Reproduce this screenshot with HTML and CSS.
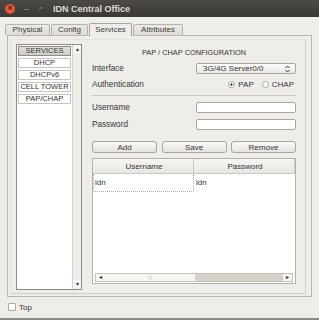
FILE: index.html
```html
<!DOCTYPE html>
<html lang="en">

<head>
  <meta charset="UTF-8">
  <title>IDN Central Office</title>
  <link rel="stylesheet" href="styles.css">
</head>

<body>
  <div class="window">
    <!-- заголовок окна -->
    <div class="titlebar">
      <span class="titlebar__close">&times;</span>
      <span class="titlebar__min">&ndash;</span>
      <span class="titlebar__max">&#8599;</span>
      <span class="titlebar__title">IDN Central Office</span>
    </div>

    <div class="tabs">
      <div class="tab">Physical</div>
      <div class="tab">Config</div>
      <div class="tab tab_active">Services</div>
      <div class="tab">Attributes</div>
    </div>

    <div class="panel">
      <div class="frame">
        <!-- список сервисов -->
        <div class="list">
          <div class="list__items">
            <div class="list__head">SERVICES</div>
            <div class="list__item">DHCP</div>
            <div class="list__item">DHCPv6</div>
            <div class="list__item">CELL TOWER</div>
            <div class="list__item">PAP/CHAP</div>
          </div>
          <div class="vscroll">
            <div class="vscroll__arrow">&#9652;</div>
            <div class="vscroll__arrow">&#9662;</div>
          </div>
        </div>

        <!-- настройки -->
        <div class="config">
          <div class="config__title">PAP / CHAP CONFIGURATION</div>
          <div class="row">
            <span>Interface</span>
            <div class="select">3G/4G Server0/0
              <svg class="select__arrow" width="5" height="8" viewBox="0 0 5 8">
                <path d="M0.5 3 L2.5 1 L4.5 3 M0.5 5 L2.5 7 L4.5 5" fill="none" stroke="#333" stroke-width="1" />
              </svg>
            </div>
          </div>
          <div class="row row_auth">
            <span>Authentication</span>
            <div class="radios">
              <span class="radio radio_on"></span>PAP
              <span class="radio"></span>CHAP
            </div>
          </div>
          <div class="sep"></div>
          <div class="row row_field">
            <span>Username</span>
            <div class="input"></div>
          </div>
          <div class="row row_field">
            <span>Password</span>
            <div class="input"></div>
          </div>
          <div class="buttons">
            <button class="btn">Add</button>
            <button class="btn">Save</button>
            <button class="btn">Remove</button>
          </div>
          <div class="table">
            <div class="table__head">
              <div class="table__cell">Username</div>
              <div class="table__cell">Password</div>
            </div>
            <div class="table__row">
              <div class="table__cell table__cell_focus">idn</div>
              <div class="table__cell">idn</div>
            </div>
            <div class="table__fill"></div>
            <div class="hscroll">
              <div class="hscroll__arrow">&#9666;</div>
              <div class="hscroll__track"><span class="hscroll__grip">|||</span></div>
              <div class="hscroll__thumb"></div>
              <div class="hscroll__arrow">&#9656;</div>
            </div>
          </div>
        </div>
      </div>
    </div>

    <div class="top">
      <span class="checkbox"></span>Top
    </div>
  </div>
</body>

</html>
```

FILE: styles.css
```css
* {
  box-sizing: border-box;
}

body {
  margin: 0;
  font-family: "Liberation Sans", Arial, sans-serif;
  font-size: 8px;
  color: #3c3c3c;
}

.window {
  width: 319px;
  height: 320px;
  background-color: #efedea;
  border-bottom: 2px solid #8e8b86;
  overflow: hidden
}

.titlebar {
  display: flex;
  align-items: center;
  height: 17px;
  padding-left: 5px;
  background: linear-gradient(#4b4a45, #3a3935);
  color: #7d7b76
}

.titlebar__close {
  display: flex;
  align-items: center;
  justify-content: center;
  width: 10px;
  height: 10px;
  border-radius: 50%;
  background: radial-gradient(#f26d4a, #d9441e);
  color: #4a2014;
  font-size: 9px;
  font-weight: 700;
  line-height: 1
}

.titlebar__min {
  margin-left: 9px;
  font-size: 9px;
  font-weight: 700
}

.titlebar__max {
  margin-left: 8px;
  font-size: 7px
}

.titlebar__title {
  margin-left: 10px;
  color: #dfdbd2;
  font-size: 9px;
  font-weight: 700
}

.tabs {
  display: flex;
  align-items: flex-end;
  height: 18px;
  padding-left: 5px
}

.tab {
  height: 11px;
  padding: 0 4px;
  margin-right: 1px;
  border: 1px solid #b7b3ab;
  border-bottom: none;
  border-radius: 2px 2px 0 0;
  background: linear-gradient(#ebe9e6, #dedbd6);
  line-height: 10px;
  text-align: center
}

.tab:nth-child(1) {
  width: 45px
}

.tab:nth-child(2) {
  width: 37px
}

.tab:nth-child(3) {
  width: 43px
}

.tab:nth-child(4) {
  width: 50px
}

.tab_active {
  height: 13px;
  margin-bottom: -1px;
  background: #efedea;
  border-color: #a9a59d;
  position: relative;
  line-height: 12px
}

.panel {
  height: 262px;
  margin: 0 7px;
  padding: 3px 5px 2px 2px;
  border: 1px solid #b9b5ae
}

.frame {
  display: flex;
  height: 100%;
  padding: 4px 0 0 5px;
  border: 1px solid #d2cec7;
  border-top-color: #e6e3df;
  border-left-color: #e6e3df
}

.list {
  display: flex;
  width: 66px;
  height: 246px;
  border: 1px solid #8f8b84;
  background: #fff
}

.list__items {
  flex: 1;
  padding: 1px 1px 0 1px
}

.list__head,
.list__item {
  height: 10px;
  margin-bottom: 2px;
  border: 1px solid #c9c5be;
  background: #fff;
  line-height: 8px;
  text-align: center;
  font-size: 7.5px;
  color: #333
}

.list__head {
  background: linear-gradient(#e2e0dc, #cfccc6);
  border-color: #8f8b84
}

.vscroll {
  display: flex;
  flex-direction: column;
  justify-content: space-between;
  width: 9px;
  border-left: 1px solid #d3cfc9;
  background: #efedea
}

.vscroll__arrow {
  height: 9px;
  font-size: 6px;
  line-height: 9px;
  text-align: center;
  color: #333;
  background: #f7f6f5
}

.config {
  display: flex;
  flex-direction: column;
  width: 204px;
  margin-left: 10px
}

.config__title {
  margin-top: 2px;
  height: 13px;
  line-height: 14px;
  text-align: center;
  font-size: 7.4px;
  color: #333
}

.row {
  display: flex;
  align-items: center;
  justify-content: space-between;
  height: 11px;
  margin-top: 4px;
  font-size: 8.2px;
  color: #333
}

.row_auth {
  margin-top: 5px
}

.row_field {
  margin-top: 6px
}

.select {
  display: flex;
  align-items: center;
  justify-content: space-between;
  width: 100px;
  height: 11px;
  padding: 0 5px 0 6px;
  border: 1px solid #aaa69e;
  border-radius: 2px;
  background: linear-gradient(#fbfbfa, #ebe9e6);
  font-size: 8px;
  color: #333
}

.radios {
  display: flex;
  align-items: center;
  padding-right: 2px;
  font-size: 8px
}

.radio {
  width: 7px;
  height: 7px;
  margin: 0 3px 0 8px;
  border: 1px solid #aaa69e;
  border-radius: 50%;
  background: #fff
}

.radio_on {
  background: radial-gradient(#555 30%, #fff 40%)
}

.sep {
  height: 1px;
  margin-top: 5px;
  background: #cdc9c2
}

.input {
  width: 100px;
  height: 11px;
  border: 1px solid #aaa69e;
  border-radius: 2px;
  background: #fff
}

.buttons {
  display: flex;
  justify-content: space-between;
  margin-top: 11px
}

.btn {
  width: 65px;
  height: 12px;
  padding: 0;
  border: 1px solid #aaa69e;
  border-radius: 3px;
  background: linear-gradient(#faf9f8, #e6e3df);
  font-family: "Liberation Sans", Arial, sans-serif;
  font-size: 8px;
  color: #333
}

.table {
  display: flex;
  flex-direction: column;
  height: 126px;
  margin-top: 5px;
  border: 1px solid #b5b1aa;
  background: #fff
}

.table__head {
  display: flex;
  height: 15px;
  background: linear-gradient(#f6f5f3, #e8e6e2);
  border-bottom: 1px solid #cfcbc4
}

.table__head .table__cell {
  justify-content: center;
  border-right: 1px solid #cfcbc4
}

.table__cell {
  display: flex;
  align-items: center;
  width: 102px;
  padding-left: 2px;
  color: #333
}

.table__row {
  display: flex;
  height: 18px
}

.table__row .table__cell {
  padding-bottom: 2px
}

.table__row .table__cell_focus {
  border: 1px dotted #b5b1aa;
  border-top: none;
  padding-left: 1px;
  padding-bottom: 1px
}

.table__fill {
  flex: 1
}

.hscroll {
  display: flex;
  height: 9px;
  margin: 0 2px 1px 2px;
  border: 1px solid #c6c2bb;
  background: #efedea
}

.hscroll__arrow {
  width: 9px;
  font-size: 6px;
  line-height: 7px;
  text-align: center;
  color: #222;
  background: #f7f6f5
}

.hscroll__track {
  width: 90px;
  text-align: center;
  font-size: 5px;
  line-height: 7px;
  color: #c8c4bd;
  background: #f7f6f5
}

.hscroll__thumb {
  flex: 1;
  background: #d6d2ca
}

.top {
  display: flex;
  align-items: center;
  height: 20px;
  padding-left: 8px;
  color: #333
}

.checkbox {
  width: 8px;
  height: 8px;
  margin-right: 3px;
  border: 1px solid #aaa69e;
  border-radius: 1px;
  background: #fff
}
```
